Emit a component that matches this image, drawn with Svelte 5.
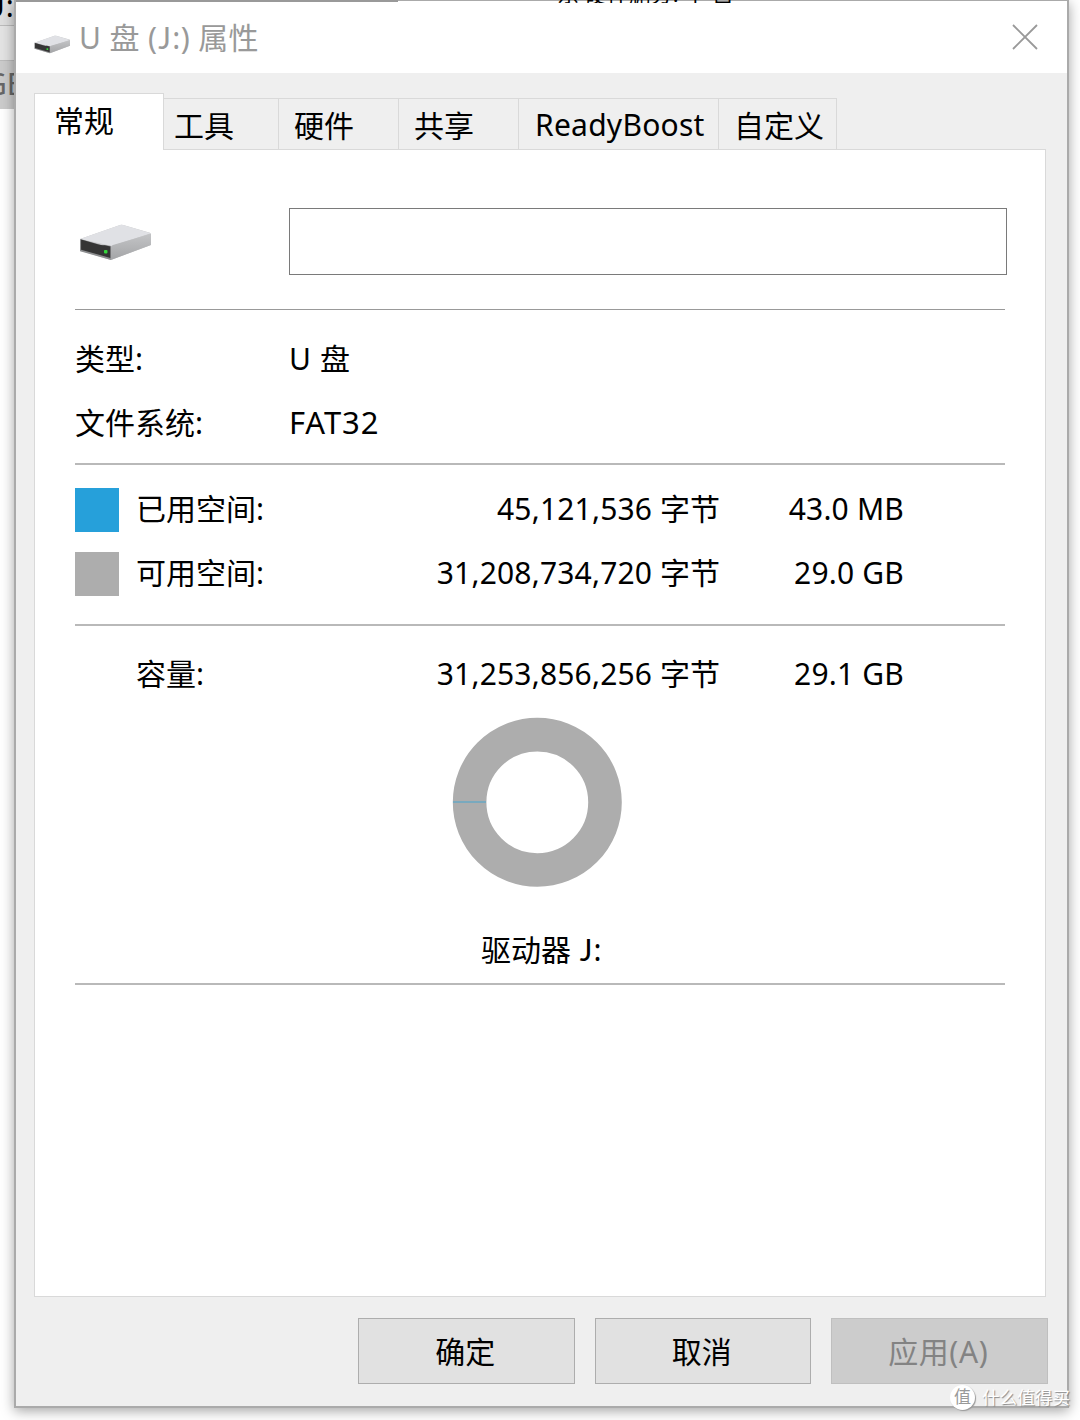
<script>
  // Drive properties sheet, "General" page.
  let active = $state(0);

  const tabs = [
    { label: '常规', w: 130 },
    { label: '工具', w: 115 },
    { label: '硬件', w: 120 },
    { label: '共享', w: 120 },
    { label: 'ReadyBoost', w: 200 },
    { label: '自定义', w: 118 },
  ];

  const space = [
    { kind: 'used', label: '已用空间:', bytes: '45,121,536', size: '43.0 MB' },
    { kind: 'free', label: '可用空间:', bytes: '31,208,734,720', size: '29.0 GB' },
  ];

  const buttons = [
    { label: '确定', disabled: false },
    { label: '取消', disabled: false },
    { label: '应用(A)', disabled: true },
  ];
</script>

{#snippet drive()}
  <svg class="drive" viewBox="0 0 72 36" aria-hidden="true">
    <defs>
      <linearGradient id="side" x1="0" y1="0" x2="0" y2="1">
        <stop offset="0" stop-color="#c3c4c6" />
        <stop offset="1" stop-color="#a4a5a7" />
      </linearGradient>
    </defs>
    <path d="M1 14.5 40 1Q41 .6 43 1L69 8.5Q70 9 70 10V20.5L31 35 1 26Z" fill="#c5c6c8" />
    <path d="M1 14.5 40 1Q41 .6 43 1L70 9 32 21.5Z" fill="#e0e1e5" />
    <path d="M31 23Q31 21.2 33 20.5L70 9.5V20.5L31 35Z" fill="url(#side)" />
    <path d="M1 14.5 20 20Q22 21 25 20.5L31 21.5V35L1 26.5Z" fill="#8d8e90" />
    <path d="M2 15 19 20Q22 21 25 20.6L30.5 21.8V33L2 25Z" fill="#353535" />
    <rect x="24.3" y="25.2" width="3.4" height="3.4" rx=".8" fill="#35d63b" />
  </svg>
{/snippet}

<div class="desktop">
  <div class="behind">
    <div class="peek head"><span><i class="j">J</i>:</span></div>
    <div class="peek gap"></div>
    <div class="peek size"><span>GB</span></div>
  </div>

  <div class="window">
    <header>
      {@render drive()}
      <h1>U 盘 (<i class="j">J</i>:) 属性</h1>
      <svg class="close" viewBox="0 0 26 26" aria-label="关闭"><path d="M1 1 25 25M25 1 1 25" /></svg>
    </header>

    <nav>
      {#each tabs as tab, i}
        <button class="tab" class:active={i === active} style="width:{tab.w}px" onclick={() => (active = i)}>{tab.label}</button>
      {/each}
    </nav>

    <main>
      <div class="name">
        {@render drive()}
        <input type="text" aria-label="卷标" />
      </div>
      <div class="info">
        <span>类型:</span><span class="type">U 盘</span>
        <span>文件系统:</span><span class="fs">FAT32</span>
      </div>
      <div class="space">
        {#each space as s}
          <div class="row">
            <i class="swatch {s.kind}"></i>
            <span>{s.label}</span>
            <span class="num"><b>{s.bytes}</b> 字节</span>
            <span class="num"><b>{s.size}</b></span>
          </div>
        {/each}
      </div>
      <div class="capacity">
        <div class="row">
          <i></i>
          <span>容量:</span>
          <span class="num"><b>31,253,856,256</b> 字节</span>
          <span class="num"><b>29.1 GB</b></span>
        </div>
        <svg class="ring" viewBox="0 0 170 170" aria-hidden="true">
          <circle cx="85.3" cy="85.3" r="67.7" />
          <path d="M1 85H34" />
        </svg>
        <div class="caption">驱动器 <i class="j">J</i>:</div>
      </div>
    </main>

    <footer>
      {#each buttons as b}
        <button disabled={b.disabled}>{b.label}</button>
      {/each}
    </footer>
  </div>

  <div class="behind-top"></div>
  <div class="behind-text"><span>东 硬件删分. 子 目 4</span></div>
  <div class="mark"><b>值</b><span>什么值得买</span></div>
</div>

<style>
  :global(body){margin:0;background:#fff}
  .desktop{position:relative;width:1080px;height:1420px;overflow:hidden;background:#fff;color:#000;
    font:30px/40px "Noto Sans","Noto Sans CJK SC",sans-serif}
  .desktop *{box-sizing:border-box}
  button,input{font:inherit;color:inherit;margin:0;padding:0;border-radius:0}
  /* J that rests on the baseline */
  .j{font-family:Lato,sans-serif;font-style:normal;margin:0 1px 0 1px}

  /* slivers of the explorer window underneath */
  .behind{position:absolute;left:0;top:0;width:16px}
  .peek{overflow:hidden;white-space:nowrap;background:#e3e3e3}
  .head{height:26px;border-bottom:1px solid #bbb;line-height:11px;background:#dedede}
  .head span{margin-left:-9px}
  .gap{height:35px;border-bottom:1px solid #bbb}
  .size{height:48px;background:#cbcbcb;color:#666;line-height:45px}
  .size span{margin-left:-15px}
  .behind-top{position:absolute;left:16px;top:0;width:382px;height:2px;background:#999}
  .behind-text{position:absolute;left:557px;top:0;width:174px;height:3px;overflow:hidden;white-space:nowrap;font-size:22px}
  .behind-text span{display:block;margin-top:-27px}

  .window{position:absolute;left:14px;top:0;width:1055px;height:1408px;display:flex;flex-direction:column;
    background:#efefef;border:2px solid #aaa;border-top-width:1px;box-shadow:0 3px 12px rgba(0,0,0,.36)}
  header{height:72px;flex:none;display:flex;align-items:center;padding:0 29px 0 18px;background:#fff;color:#999}
  header .drive{width:37px;height:19px;margin-top:15px}
  h1{flex:1;margin:0 0 0 8px;font-size:30px;font-weight:400;letter-spacing:.35px}
  .close{width:26px;height:26px;fill:none;stroke:#999;stroke-width:1.8}

  nav{height:76px;flex:none;display:flex;align-items:flex-end;padding-left:18px}
  .tab{height:51px;padding:3px 0 0 15px;text-align:left;white-space:nowrap;background:#efefef;
    border:1px solid #d9d9d9;border-left:0;border-bottom:0}
  .tab:nth-child(2){padding-left:10px}
  .tab:nth-child(5){padding:1px 0 0 16px;letter-spacing:.25px}
  .tab.active{height:57px;margin-bottom:-1px;padding:0 0 2px 19px;background:#fff;border-left:1px solid #d9d9d9;z-index:1}

  main{width:1012px;height:1148px;flex:none;margin-left:18px;padding:0 40px;background:#fff;border:1px solid #d9d9d9}
  .name,.info,.space,.capacity{border-bottom:2px solid #b9b9b9}
  .name{height:160px;display:flex;align-items:flex-start;padding-top:58px;border-bottom:1px solid #999}
  .name .drive{width:74px;height:37px;flex:none;margin:16px 0 0 4px}
  input{width:718px;height:67px;margin-left:136px;flex:none;border:1px solid #7a7a7a;outline:0;background:#fff}
  .info{height:155px;display:grid;grid-template-columns:214px 1fr;grid-auto-rows:64px;align-items:center;padding-top:17px}
  .type{letter-spacing:.6px;padding-bottom:1px}
  .fs{font-size:31px;letter-spacing:.9px;padding-bottom:2px}
  .space{height:161px;padding-top:13px}
  .row{height:64px;display:grid;grid-template-columns:61px 260px 324px 184px;align-items:center}
  .row span{padding-bottom:2px}
  .row .num{padding-bottom:3px}
  .num{text-align:right;white-space:nowrap}
  .num b{font-weight:400;letter-spacing:.18px}
  .swatch{width:44px;height:44px}
  .used{background:#26a0da}
  .free{background:#adadad}
  .capacity{height:359px;display:flex;flex-direction:column;padding-top:17px}
  .ring{width:170px;height:170px;margin:10px 0 0 377px;fill:none}
  .ring circle{stroke:#adadad;stroke-width:33.6}
  .ring path{stroke:#69a8c4;stroke-width:1.5}
  .caption{margin:42px 0 0 406px}

  footer{display:flex;gap:20px;padding:21px 0 0 342px}
  footer button{width:216.5px;height:66px;background:#e1e1e1;border:1px solid #adadad;padding:2px 2px 0 0}
  footer button:disabled{background:#ccc;border-color:#bfbfbf;color:#838383;letter-spacing:.6px}

  .mark{position:absolute;left:950px;top:1384px;display:flex;align-items:center;gap:7px;white-space:nowrap;
    color:#fff;font-size:17.6px;line-height:26px;text-shadow:1px 1px 1px #888}
  .mark b{width:25px;height:25px;border-radius:50%;background:#fff;color:#999;font-weight:400;font-size:17px;
    line-height:24px;text-align:center;text-shadow:none;box-shadow:1px 1px 1px #999}
</style>
